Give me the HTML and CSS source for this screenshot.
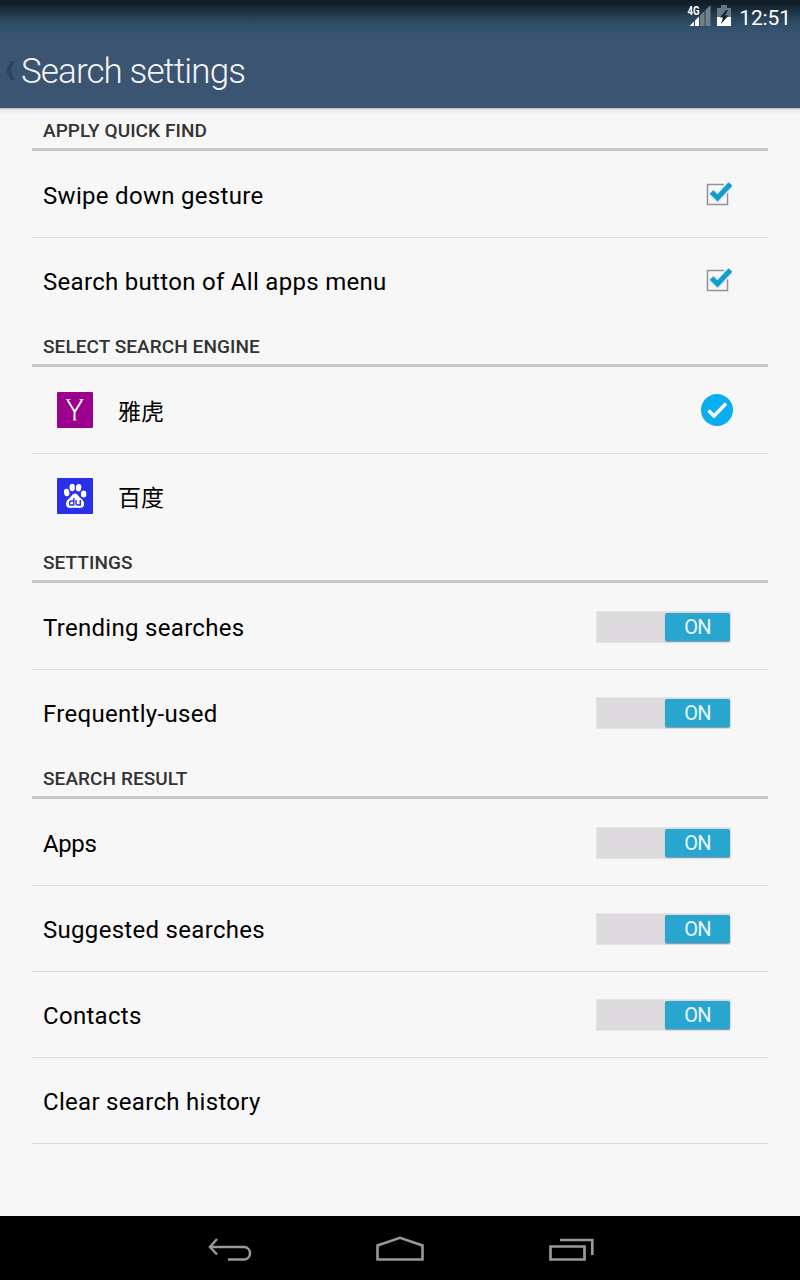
FILE: index.html
```html
<!DOCTYPE html>
<html lang="en">
<head>
<meta charset="utf-8">
<title>Search settings</title>
<link rel="stylesheet" href="styles.css">
</head>
<body>
<div class="top">
  <div class="status">
    <svg class="signal" width="24" height="22" viewBox="0 0 24 22">
      <path d="M23.500 0V21H18.500V5zM17.500 6V21H13V10.500z" fill="#6f818d"/>
      <path d="M12 11.500V21H8V15.500zM7 16.500V21H2.500z" fill="#fff"/>
      <text x="0.500" y="10" class="net" textLength="12" lengthAdjust="spacingAndGlyphs">4G</text>
    </svg>
    <svg class="battery" width="14" height="22" viewBox="0 0 14 22">
      <path d="M4 0H10V3H14V12H0V3H4z" fill="#667984"/><path d="M0 12H14V21H0z" fill="#fff"/>
      <path d="M9 5L3 12.500H6L4 19L11.500 10.500H8L11 5z" fill="#14232e"/>
    </svg>
    <span class="time">12:51</span>
  </div>
  <div class="title-bar">
    <svg class="up" width="10" height="20" viewBox="0 0 10 20"><path d="M5 0H9L4 10L9 19H5L0 10z" fill="#2d425b"/></svg>
    <h1>Search settings</h1>
  </div>
</div>
<main>
  <section>
    <h2>APPLY QUICK FIND</h2>
    <div class="row"><span class="label">Swipe down gesture</span>
      <svg class="check" width="30" height="30" viewBox="0 0 30 30"><path d="M20 5.500H3.500V25.500H23.500V14" fill="none" stroke="#979194" stroke-width="1.500"/><path d="M8 13L13.500 19L26 6" fill="none" stroke="#d4edf8" stroke-width="8"/><path d="M7.500 13L13.500 19L26.500 5" fill="none" stroke="#179bcb" stroke-width="5"/></svg>
    </div>
    <div class="row"><span class="label">Search button of All apps menu</span>
      <svg class="check" width="30" height="30" viewBox="0 0 30 30"><path d="M20 5.500H3.500V25.500H23.500V14" fill="none" stroke="#979194" stroke-width="1.500"/><path d="M8 13L13.500 19L26 6" fill="none" stroke="#d4edf8" stroke-width="8"/><path d="M7.500 13L13.500 19L26.500 5" fill="none" stroke="#179bcb" stroke-width="5"/></svg>
    </div>
  </section>
  <section>
    <h2>SELECT SEARCH ENGINE</h2>
    <div class="row engine">
      <svg class="logo" width="36" height="36" viewBox="0 0 36 36"><rect width="36" height="36" rx="1" fill="#9b008f"/><path d="M10.500 8L17.500 19.500V28M25 8L18 19.500" fill="none" stroke="#fff" stroke-width="2"/><path d="M9 7.500H13.500M22.500 7.500H26.500M16 28H19.500" stroke="#fff" stroke-width=".8"/></svg>
      <span class="label cjk">雅虎</span>
      <svg class="selected" width="32" height="32" viewBox="0 0 32 32"><circle cx="16" cy="16" r="16" fill="#0aaeef"/><path d="M7.500 16.500L13 22L25 9.500" fill="none" stroke="#fff" stroke-width="3.400"/></svg>
    </div>
    <div class="row engine">
      <svg class="logo" width="36" height="36" viewBox="0 0 36 36"><rect width="36" height="36" rx="1" fill="#2830e8"/><g fill="#fff"><ellipse cx="9.700" cy="14.500" rx="2.700" ry="3.700" transform="rotate(-10 9.700 14.500)"/><ellipse cx="15.200" cy="9.500" rx="2.700" ry="3.700"/><ellipse cx="21.600" cy="9.700" rx="2.700" ry="3.700" transform="rotate(10 21.600 9.700)"/><ellipse cx="26.600" cy="16" rx="2.800" ry="3.500"/><path d="M18 15.500C15.500 15.500 14.500 18.500 12 20.500C9.500 22.500 8.500 25 9.300 27.500C10.300 31 14.500 29.700 18 29.700C21.500 29.700 25.700 31 26.900 27.500C27.800 24.700 26.300 22.500 24 20.500C21.500 18.500 20.500 15.500 18 15.500z"/></g><path d="M16.800 20V27.500M16.500 23H14.500Q12.500 23 12.500 25.200T14.500 27H16.800M19 22V25Q19 27 21 27H23.300V22" fill="none" stroke="#2830e8" stroke-width="1.400"/></svg>
      <span class="label cjk">百度</span>
    </div>
  </section>
  <section>
    <h2>SETTINGS</h2>
    <div class="row"><span class="label">Trending searches</span><span class="switch"><b>ON</b></span></div>
    <div class="row"><span class="label">Frequently-used</span><span class="switch"><b>ON</b></span></div>
  </section>
  <section class="last">
    <h2>SEARCH RESULT</h2>
    <div class="row"><span class="label tight">Apps</span><span class="switch"><b>ON</b></span></div>
    <div class="row"><span class="label">Suggested searches</span><span class="switch"><b>ON</b></span></div>
    <div class="row"><span class="label">Contacts</span><span class="switch"><b>ON</b></span></div>
    <div class="row"><span class="label">Clear search history</span></div>
  </section>
</main>
<nav>
  <svg width="44" height="26" viewBox="0 0 44 26"><path d="M9 3L2 11L9 18.500M2 11H36.500A6.300 6.300 0 0 1 36.500 23.500H20" fill="none" stroke="#999" stroke-width="2.500"/></svg>
  <svg width="48" height="26" viewBox="0 0 48 26"><path d="M1.500 9.500L24 1.800L46.500 9.500V23.500H1.500z" fill="none" stroke="#999" stroke-width="2.600"/></svg>
  <svg width="46" height="26" viewBox="0 0 46 26"><path d="M1.500 10.500H35.500V23.500H1.500zM11 4H43.300V19" fill="none" stroke="#999" stroke-width="2.700"/></svg>
</nav>
</body>
</html>
```
FILE: styles.css
```css
* { box-sizing: border-box; }
body {
  margin: 0; height: 1280px; overflow: hidden;
  display: flex; flex-direction: column;
  background: #f7f7f7; font-family: Roboto, "Noto Sans CJK SC", sans-serif; color: #000;
}
svg { display: block; flex: none; overflow: visible; }
.top {
  height: 108px; flex: none;
  background: linear-gradient(#101c25 0, #13212b 5px, #2a4358 18px, #31506a 27px, #34526e 32px, #3a5472 33px);
}
.status { height: 33px; display: flex; justify-content: flex-end; padding: 5px 9px 0 0; }
.signal { margin-right: 6px; }
.battery { margin-right: 8px; }
.net { font: bold 12px Roboto, sans-serif; fill: #fff; }
.time { padding-top: 1px; font-size: 21px; line-height: 25px; color: #fff; letter-spacing: -.1px; }
.title-bar { height: 75px; display: flex; align-items: center; padding-left: 6px; }
.up { margin-right: 5px; }
h1 { margin: 3px 0 0; font-size: 35px; font-weight: 300; line-height: 42px; letter-spacing: -.9px; color: #f5f5f5; }
main { flex: 1; padding: 0 32px; background: linear-gradient(#a9a8ad 0, #e4e3e8 1px, #f0edf1 3px, #f7f7f7 7px); }
h2 {
  margin: 0; height: 43px; padding: 11px 11px 0; border-bottom: 3px solid #c8c8c8;
  font-size: 19px; font-weight: 500; line-height: 24px; letter-spacing: .07px; color: #333;
}
.row {
  height: 86px; display: flex; align-items: flex-start;
  padding: 27px 35px 0 11px; border-bottom: 1px solid #dadada;
}
h2 + .row { height: 87px; padding-top: 28px; }
.row:last-child { border-bottom-color: transparent; }
.last .row:last-child { border-bottom-color: #dadada; }
.label { font-size: 24px; line-height: 30px; letter-spacing: .3px; padding-top: 2px; flex: 1; }
.tight { letter-spacing: -.4px; }
.check { margin-right: -1px; }
.engine { padding-left: 25px; }
.engine > svg { margin-top: -3px; }
.engine > .selected { margin-top: -1px; }
.cjk { font-size: 23px; letter-spacing: 0; padding-top: 3px; }
.logo { margin-right: 25px; }
.switch {
  width: 135px; height: 32px; margin-right: 2px; padding: 1px 0; display: flex; justify-content: flex-end;
  background: #dddadd; border: 1px solid #e5e3e6;
}
.switch b {
  width: 65px; height: 28px; border-radius: 2px; background: #29a6d0;
  box-shadow: 0 1px 1px #7d9ba8; color: #e9f6fa;
  font-size: 20px; font-weight: 400; line-height: 29px; letter-spacing: -.7px; text-align: center;
}
nav { height: 64px; flex: none; display: flex; padding: 20px 0 0 208px; background: #000; }
nav svg + svg { margin-left: 124px; }
nav svg + svg + svg { margin-left: 125px; }
```
